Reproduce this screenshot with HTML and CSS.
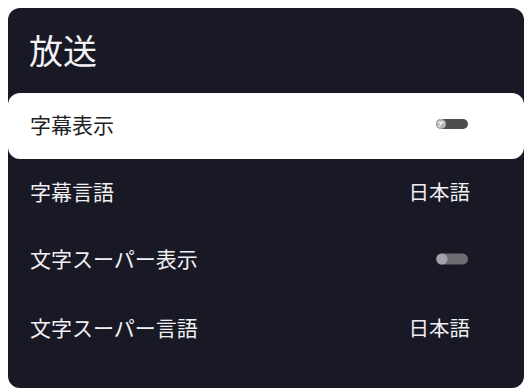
FILE: index.html
```html
<!DOCTYPE html>
<html lang="ja">
<head>
<meta charset="utf-8">
<link rel="stylesheet" href="styles.css">
</head>
<body>
<div class="panel">
  <div class="header"><h1 class="title">放送</h1></div>
  <div class="row row-focus">
    <span class="label">字幕表示</span>
    <svg class="toggle" width="34" height="12" viewBox="0 0 34 12">
      <rect x="1" y="1" width="32" height="10" rx="5" fill="#4e4e50"/>
      <circle cx="6" cy="6" r="5" fill="#b4b4b6"/>
      <path d="M3 4.5h5.5M7.5 3.5L4 9" stroke="#f4f4f4" stroke-width="1.3" fill="none"/>
    </svg>
  </div>
  <div class="row">
    <span class="label">字幕言語</span>
    <span class="value">日本語</span>
  </div>
  <div class="row">
    <span class="label">文字スーパー表示</span>
    <svg class="toggle" width="34" height="14" viewBox="0 0 34 14">
      <rect x="1" y="1.5" width="32" height="11" rx="5.5" fill="#6c6c72"/>
      <circle cx="7" cy="7" r="5.5" fill="#a2a2a8"/>
    </svg>
  </div>
  <div class="row">
    <span class="label">文字スーパー言語</span>
    <span class="value">日本語</span>
  </div>
</div>
</body>
</html>
```
FILE: styles.css
```css
html, body {
  margin: 0;
  padding: 0;
  background: #ffffff;
}
body {
  padding: 8px;
  font-family: "Noto Sans CJK JP", "Noto Sans", sans-serif;
}
.panel {
  width: 516px;
  height: 380px;
  background: #191926;
  border-radius: 12px;
  display: flex;
  flex-direction: column;
  overflow: hidden;
}
.header {
  height: 85px;
  display: flex;
  align-items: center;
  padding-left: 21px;
}
.title {
  margin: 0;
  font-size: 34px;
  font-weight: 400;
  color: #f4f4f6;
  line-height: 1;
  position: relative;
  top: -1px;
}
.row {
  height: 69px;
  display: flex;
  align-items: center;
  justify-content: space-between;
  padding: 0 55px 0 22px;
  color: #f0f0f2;
  font-size: 21px;
  line-height: 1;
}
.row-focus {
  height: 66px;
  background: #ffffff;
  color: #222226;
  border-radius: 12px;
  padding-bottom: 4px;
  box-sizing: border-box;
}
.row-focus + .row {
  height: 65px;
}
.label, .value {
  white-space: nowrap;
}
.value {
  font-size: 20.5px;
  margin-right: -1px;
}
.toggle {
  display: block;
  margin-right: 0;
}
```
